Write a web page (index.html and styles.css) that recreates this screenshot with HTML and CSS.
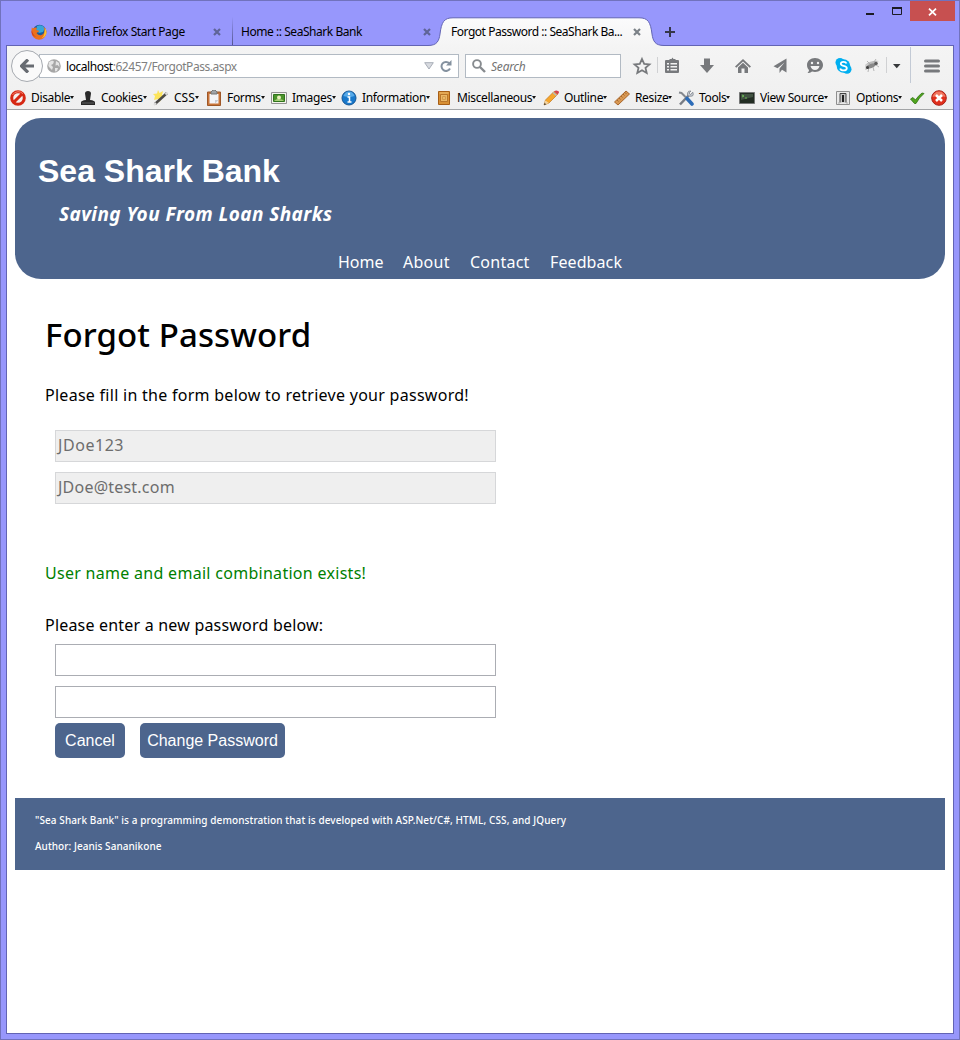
FILE: index.html
```html
<!DOCTYPE html>
<html lang="en">
<head>
<meta charset="utf-8">
<title>Forgot Password :: SeaShark Bank</title>
<link rel="stylesheet" href="styles.css">
</head>
<body>
<div class="window">
  <header class="titlebar">
    <div class="tab tab-first">
      <svg class="favicon" width="16" height="16" viewBox="0 0 16 16"><circle cx="8.500" cy="7.500" r="6.700" fill="#1b5c9e"/><path d="M6 2q5-2 8 2l-2 4-4 1-3-3z" fill="#36a5d8"/><path d="M1 3q0 1 1 1.500Q4 3 6 4L5 6q3 0 3 1.500L5.500 9q2 3 5 2 3-1 3-5l-1-3q3 2 3 5.500A7.500 7.500 0 0 1 .5 8Q.3 5 1 3z" fill="#ec701c"/><path d="M14 4q1.500 2 1.500 5-1 4-5 5.500 3-3 3-6z" fill="#fbc52b"/><path d="M1 6q0 4 4 7-4-1-4.500-5z" fill="#c93a22"/></svg>
      <span class="tab-label fit-a">Mozilla Firefox Start Page</span>
      <svg class="tab-close" width="8" height="8" viewBox="0 0 8 8"><path d="M1 1l6 6M7 1L1 7" stroke="#5f6498" stroke-width="2.200"/></svg>
    </div>
    <div class="tab tab-second">
      <span class="tab-label fit-b">Home :: SeaShark Bank</span>
      <svg class="tab-close" width="8" height="8" viewBox="0 0 8 8"><path d="M1 1l6 6M7 1L1 7" stroke="#5f6498" stroke-width="2.200"/></svg>
    </div>
    <div class="tab tab-active">
      <svg class="tab-shape" width="236" height="30" viewBox="0 0 236 30"><defs><linearGradient id="tabfill" x2="0" y2="1"><stop stop-color="#fbfbfc"/><stop offset="1" stop-color="#f4f4f4"/></linearGradient></defs><path d="M0 28.500C9 28.500 11 24 12 17 13.500 5 16 .8 25 .8H211C220 .8 222.500 5 224 17 225 24 227 28.500 236 28.500V30H0z" fill="url(#tabfill)"/><path d="M0 28.500C9 28.500 11 24 12 17 13.500 5 16 .8 25 .8H211C220 .8 222.500 5 224 17 225 24 227 28.500 236 28.500" fill="none" stroke="#6264b4"/></svg>
      <span class="tab-label fit-c">Forgot Password :: SeaShark Ba...</span>
      <svg class="tab-close" width="8" height="8" viewBox="0 0 8 8"><path d="M1 1l6 6M7 1L1 7" stroke="#7b8187" stroke-width="2.200"/></svg>
    </div>
    <svg class="new-tab" width="10" height="10" viewBox="0 0 10 10"><path d="M5 0v10M0 5h10" stroke="#35364a" stroke-width="2"/></svg>
    <div class="window-controls">
      <svg width="45" height="20" viewBox="0 0 45 20"><path d="M1 13h8" stroke="#1b1b24" stroke-width="2"/><path d="M27.500 6.500h9v7h-9z" fill="none" stroke="#1b1b24"/><path d="M27 7h10" stroke="#1b1b24" stroke-width="2"/></svg>
      <div class="close-window"><svg width="9" height="8" viewBox="0 0 9 8"><path d="M1 .7l7 6.600M8 .7L1 7.300" stroke="#fff" stroke-width="1.800"/></svg></div>
    </div>
  </header>

  <div class="viewport">
    <div class="chrome">
      <div class="navbar">
        <div class="back"><svg width="14" height="14" viewBox="0 0 14 14"><path d="M8 0.500L1.500 7l6.500 6.500M2 7h12" fill="none" stroke="#686c72" stroke-width="3.200"/></svg></div>
        <div class="urlbar">
          <svg width="14" height="14" viewBox="0 0 14 14"><circle cx="7" cy="7" r="6.800" fill="#a7a7a7"/><path d="M2 3l3-1.500 2 1-1 2.500-2 1 2 2-1 3-2-2-1.700-2zM9 2l3 2 .5 4-2-2-2 .5zM8 9l3 0-1 3-2 .5z" fill="#e4e4e4"/></svg>
          <span class="url"><b>localhost</b>:62457/ForgotPass.aspx</span>
          <svg class="drop" width="10" height="8" viewBox="0 0 10 8"><path d="M.7 .7h8.600L5 7z" fill="#d8dbe0" stroke="#a8adb7"/></svg>
          <svg width="12" height="12" viewBox="0 0 12 12"><path d="M9.300 3.300A4.500 4.500 0 1 0 10 8.500" fill="none" stroke="#84919f" stroke-width="2"/><path d="M11.500 0v5.500H6z" fill="#84919f"/></svg>
        </div>
        <div class="searchbar">
          <svg width="14" height="14" viewBox="0 0 14 14"><circle cx="5" cy="5" r="3.900" fill="none" stroke="#878b8f" stroke-width="1.900"/><path d="M8 8l5 5" stroke="#878b8f" stroke-width="2.400"/></svg>
          <span>Search</span>
        </div>
        <svg class="actions" width="332" height="40" viewBox="0 0 332 40">
          <g fill="#77797c">
            <path d="M21 13l2.200 4.800 5.300.6-4 3.500 1.200 5.100-4.700-2.700-4.700 2.700 1.200-5.100-4-3.500 5.300-.6z" fill="none" stroke="#77797c" stroke-width="1.800"/>
            <path d="M36.500 11v16" stroke="#d0d1d3"/>
            <path d="M45 14h3.500v-1h2l1-1.500 1 1.500h2v1H57q1 0 1 1v11q0 1-1 1H45q-1 0-1-1V15q0-1 1-1zM46 17v1.500h2V17zm3.500 0v1.500H56V17zM46 20v1.500h2V20zm3.500 0v1.500H56V20zM46 23v1.500h2V23zm3.500 0v1.500H56V23z" fill-rule="evenodd"/>
            <path d="M83 12.500h6v6.500h4l-7 8-7-8h4z"/>
            <path d="M122 13l8 7.500-1.300 1.300-6.700-6.300-6.700 6.300-1.300-1.300zM122 16.800l5 4.700V27h-3.500v-4.500h-3V27H117v-5.500z"/>
            <path d="M165.500 12.500v14l-4.500-2.700-2.500 3.200v-4.500l5-6-7 5.700-4-2z"/>
            <path d="M194 12c4.500 0 8 2.900 8 7s-3.500 7-8 7c-1 0-2-.2-3-.5-1.300 1-3 1.500-4.500 1.500 1-.8 1.500-2 1.500-3-1.300-1.300-2-3-2-5 0-4 3.500-7 8-7z"/>
            <circle cx="191" cy="17" r="1.200" fill="#f3f3f3"/><circle cx="197" cy="17" r="1.200" fill="#f3f3f3"/><path d="M189.500 20h9q-1 4-4.500 4t-4.500-4z" fill="#f3f3f3"/>
          </g>
          <g fill="#00aff0"><circle cx="222.500" cy="20" r="6.800"/><circle cx="219" cy="16.500" r="4.500"/><circle cx="226" cy="23.300" r="4.500"/></g>
          <path d="M225.500 17.500q-.7-1.700-3-1.700-2.700 0-2.700 2 0 1.500 2.700 2 3.300.6 3.300 2.400 0 2.200-3.200 2.200-2.800 0-3.400-2" fill="none" stroke="#fff" stroke-width="1.800"/>
          <g opacity=".85"><path d="M244 19q6-5 14-4-4 1-6 3l-8 1" fill="#b4b4b4"/><ellipse cx="250" cy="20" rx="5" ry="2" fill="#777" transform="rotate(-20 250 20)"/><circle cx="255" cy="17.500" r="1.800" fill="#444"/><path d="M245 19v5m3-3l-1 5m5-5l1 4m2-6l3 2M249 18l-3-3m7 1l2-3" stroke="#999" stroke-width=".8"/><circle cx="246.500" cy="21.500" r="1.500" fill="#222"/></g>
          <path d="M265.500 11v16" stroke="#d0d1d3"/><path d="M272 18h7.500l-3.750 4.300z" fill="#36383a"/>
          <path d="M289.500 1v36" stroke="#c3cad5"/><path d="M304.500 15h13M304.500 20h13M304.500 25h13" stroke="#77797c" stroke-width="3" stroke-linecap="round"/>
        </svg>
      </div>

      <div class="devbar">
        <div class="tool w1"><svg width="16" height="16" viewBox="0 0 16 16"><circle cx="8" cy="8" r="6.300" fill="#f4efee" stroke="#d62814" stroke-width="3"/><path d="M12.500 3.500l-9 9" stroke="#d62814" stroke-width="3"/><path d="M2.500 5Q4 2 8 1.700q3 0 5 2" fill="none" stroke="#f2806d"/></svg><span>Disable</span></div>
        <div class="tool w2"><svg width="16" height="16" viewBox="0 0 16 16"><path d="M5 3.500Q5 1 8 1t3 2.500L10.300 8 10 10q5 .5 5 2.500V15H1v-2.500Q1 10.500 6 10l-.3-2z" fill="#292929"/><path d="M2 13h12" stroke="#626262"/></svg><span>Cookies</span></div>
        <div class="tool w3"><svg width="16" height="16" viewBox="0 0 16 16"><path d="M5 0l1.500 3L10 1 9 5l3 2-4 1-1 4-2-3-4 1 1-4-2-2 4-.5z" fill="#fce45b"/><path d="M2 14L14 3" stroke="#4b4a48" stroke-width="2.500"/><path d="M1 15l2-2M12.500 4.500L14.500 2.500" stroke="#ddd" stroke-width="2"/></svg><span>CSS</span></div>
        <div class="tool w4"><svg width="16" height="16" viewBox="0 0 16 16"><path d="M1.500 2h13v13.500h-13z" fill="#c97539" stroke="#9e5728"/><path d="M3.500 4h9v9.500h-9z" fill="#f4f4f8"/><path d="M5 4V2l2-2h2l2 2v2z" fill="#a0a4aa" stroke="#777"/><path d="M9 13.500V10h3.500z" fill="#c8cbd3"/></svg><span>Forms</span></div>
        <div class="tool w5"><svg width="16" height="16" viewBox="0 0 16 16"><path d="M.5 2.500h15v11H.5z" fill="#f5f5ed" stroke="#929292"/><path d="M2.500 4.500h11v7h-11z" fill="#4b932a" stroke="#2f731c"/><path d="M3 11l3-2 5 .5 2 1.500z" fill="#a6ce77"/><circle cx="8" cy="7.500" r="2" fill="#e8f0bc"/></svg><span>Images</span></div>
        <div class="tool w6"><svg width="16" height="16" viewBox="0 0 16 16"><circle cx="8" cy="8" r="7" fill="#1878cb" stroke="#145594"/><path d="M2.500 6Q4 1.500 8 1.500T13.500 6q-5 2-11 0z" fill="#56a9e8"/><circle cx="8" cy="4" r="1.200" fill="#fff"/><path d="M6.500 7h2v5M6.500 12h4" fill="none" stroke="#fff" stroke-width="1.500"/></svg><span>Information</span></div>
        <div class="tool w7"><svg width="16" height="16" viewBox="0 0 16 16"><path d="M2.500 1.500h11v13h-11z" fill="#d89034" stroke="#a75e16"/><path d="M4.500 4.500h7v7h-7z" fill="#eab867" stroke="#b9752a"/><path d="M6.500 6.500h3v3h-3z" fill="none" stroke="#d49a4c"/><path d="M3.500 3h9" stroke="#efc177"/></svg><span>Miscellaneous</span></div>
        <div class="tool w8"><svg width="16" height="16" viewBox="0 0 16 16"><path d="M1 15l1.500-5L11 1.500l3.500 3L6 13z" fill="#f6a62c" stroke="#c07821" stroke-width=".7"/><path d="M11 1.500Q13 0 15 1t0 3l-.5.5z" fill="#d5434c"/><path d="M10 2.500l3.500 3" stroke="#b6bbc5" stroke-width="1.500"/><path d="M1 15l1.300-4.500L6 13z" fill="#f2d4a2"/><path d="M1 15l.6-2 1.500 1.300z" fill="#222"/></svg><span>Outline</span></div>
        <div class="tool w9"><svg width="16" height="16" viewBox="0 0 16 16"><path d="M.5 12L12 1l3.500 3L4 15z" fill="#d79752" stroke="#a9662a"/><path d="M3 10l1.500 1.500M5 8l1.500 1.500M7 6l1.500 1.500M9 4l1.500 1.500M11 2.500l1.500 1.500" stroke="#91541e" stroke-width=".7"/></svg><span>Resize</span></div>
        <div class="tool w10"><svg width="16" height="16" viewBox="0 0 16 16"><path d="M2 14.500L11 5" stroke="#777c85" stroke-width="2.500"/><path d="M14.800 2.200L12.500 4.500l-1.500-1.500L13 1Q10 .5 9.500 3t1 3T14.500 6q1.500-1.500.3-3.800z" fill="#c2c7cf" stroke="#777c85" stroke-width=".7"/><path d="M1 2.500l2.500.5L10 9.500" fill="none" stroke="#85898f" stroke-width="2"/><path d="M9 8.500l5 5.500" stroke="#2c6cb8" stroke-width="3.600" stroke-linecap="round"/></svg><span>Tools</span></div>
        <div class="tool w11"><svg width="16" height="16" viewBox="0 0 16 16"><path d="M.5 2.500h15v11H.5z" fill="#222d23" stroke="#757777"/><path d="M2 4h12v3L2 10z" fill="#415342"/><path d="M3 5l2 1-2 1M6 8h2" fill="none" stroke="#78d45a" stroke-width=".8"/></svg><span>View Source</span></div>
        <div class="tool w12"><svg width="16" height="16" viewBox="0 0 16 16"><path d="M1.500 1.500h13v13h-13z" fill="#e9e9e9" stroke="#8e8e8e"/><path d="M5 12.500v-9h6v9" fill="#c4c4c4" stroke="#444"/><path d="M7 5h2v7H7z" fill="#222"/><path d="M3.500 13h1M11.500 13h1" stroke="#777"/></svg><span>Options</span></div>
        <svg class="valid" width="16" height="16" viewBox="0 0 16 16"><path d="M1.500 9l2.500-1.500 2.500 2.500Q9 6 13 3l2 .5Q10 7.500 7 13.500H5.500z" fill="#51a51e" stroke="#2d7210" stroke-width=".8"/></svg>
        <svg width="16" height="16" viewBox="0 0 16 16"><circle cx="8" cy="8" r="7.300" fill="#e1301d" stroke="#aa2118"/><path d="M1.500 7Q3 1.500 8 1.500T14.500 7q-6-2-13 0z" fill="#f17760"/><path d="M5 5l6 6M11 5l-6 6" stroke="#fff" stroke-width="2.500"/></svg>
      </div>
    </div>

    <main class="page">
      <div class="banner">
        <div class="bank-name">Sea Shark Bank</div>
        <div class="tagline">Saving You From Loan Sharks</div>
        <nav class="menu"><a class="m1">Home</a><a class="m2">About</a><a class="m3">Contact</a><a class="m4">Feedback</a></nav>
      </div>
      <section class="content">
        <h1>Forgot Password</h1>
        <p class="intro">Please fill in the form below to retrieve your password!</p>
        <div class="fields">
          <div class="field disabled f1">JDoe123</div>
          <div class="field disabled f2">JDoe@test.com</div>
        </div>
        <p class="success">User name and email combination exists!</p>
        <p class="prompt">Please enter a new password below:</p>
        <div class="fields">
          <div class="field"></div>
          <div class="field"></div>
        </div>
        <div class="buttons"><button class="btn cancel">Cancel</button><button class="btn change">Change Password</button></div>
      </section>
      <footer class="footer">
        <p class="about">"Sea Shark Bank" is a programming demonstration that is developed with ASP.Net/C#, HTML, CSS, and JQuery</p>
        <p class="author">Author: Jeanis Sananikone</p>
      </footer>
    </main>
  </div>
</div>
</body>
</html>
```

FILE: styles.css
```css
* { box-sizing: border-box; }
body { margin: 0; font-family: "Noto Sans", "Open Sans", sans-serif; color: #000; }
svg { display: block; flex: none; }
p, h1 { margin: 0; }
.window { width: 960px; height: 1040px; background: #9797fc; border: 1px solid #7172bd; display: flex; flex-direction: column; overflow: hidden; }

/* Tab strip */
.titlebar { height: 44px; flex: none; display: flex; font-size: 12px; line-height: 16px; white-space: nowrap; }
.tab { display: flex; align-items: center; padding-top: 17px; height: 45px; }
.tab-label { flex: none; }
.tab-close { margin-left: auto; }
.tab-first { width: 232px; padding-left: 30px; padding-right: 11px; border-right: 1px solid; border-image: linear-gradient(transparent 35%, #4f5185) 1; }
.favicon { margin-right: 6px; }
.tab-second { width: 206px; padding-left: 8px; padding-right: 8px; }
.tab-active { position: relative; width: 215px; padding-left: 12px; padding-right: 13px; }
.tab-shape { position: absolute; left: -11px; top: 16px; z-index: 1; }
.tab-active .tab-label, .tab-active .tab-close { position: relative; z-index: 2; }
.new-tab { margin: 26px 0 0 11px; }
.window-controls { margin-left: auto; display: flex; margin-right: 4px; }
.close-window { width: 45px; height: 20px; background: #c75050; display: flex; align-items: center; justify-content: center; padding-top: 1px; }
.fit-a { letter-spacing: -0.41px; }
.fit-b { letter-spacing: -0.45px; }
.fit-c { letter-spacing: -0.47px; }

/* Browser frame */
.viewport { margin: 0 5px 5px; flex: 1; border: 1px solid #6264b4; background: #fff; display: flex; flex-direction: column; }
.chrome { height: 64px; flex: none; background: linear-gradient(#f4f4f4, #efefef); border-bottom: 1px solid #a2a4a6; }
.navbar { height: 40px; display: flex; align-items: center; }
.back { width: 32px; height: 32px; margin-left: 4px; border: 1px solid #a6aab0; border-radius: 50%; background: #fafafa; display: flex; align-items: center; justify-content: center; z-index: 1; }
.urlbar { width: 420px; height: 24px; margin-left: -4px; border: 1px solid #b2bac3; background: #fff; display: flex; align-items: center; padding: 0 6px 0 7px; font-size: 12px; }
.url { margin-left: 5px; color: #808080; letter-spacing: -0.45px; }
.url b { font-weight: 400; color: #000; }
.drop { margin-left: auto; margin-right: 6px; }
.searchbar { width: 156px; height: 24px; margin-left: 6px; border: 1px solid #b2bac3; background: #fff; display: flex; align-items: center; padding-left: 6px; gap: 5px; font-size: 12px; font-style: italic; color: #737373; letter-spacing: -0.2px; }

/* Developer toolbar */
.devbar { height: 23px; display: flex; align-items: center; padding-left: 3px; font-size: 12px; letter-spacing: -0.35px; white-space: nowrap; }
.tool { display: flex; align-items: center; flex: none; }
.tool span { margin-left: 5px; }
.tool::after { content: ""; border: 2.5px solid transparent; border-top: 3px solid #111; border-bottom: 0; }
.w1 { width: 70px; } .w2 { width: 73px; } .w3 { width: 53px; } .w4 { width: 65px; }
.w5 { width: 70px; } .w6 { width: 95px; } .w7 { width: 107px; } .w8 { width: 71px; }
.w9 { width: 64px; } .w10 { width: 61px; } .w11 { width: 96px; } .w12 { width: 74px; }
.w3 { letter-spacing: 0; }
.valid { margin-right: 6px; }

/* Bank page */
.page { padding: 8px; font-size: 16px; line-height: 20px; }
.banner { height: 161px; background: #4d658d; border-radius: 26px; color: #fff; padding: 35px 0 0 23px; }
.bank-name { font: bold 32px/37px "Liberation Sans", Arial, sans-serif; }
.tagline { margin: 12px 0 0 21px; font-size: 19px; line-height: 24px; font-style: italic; font-weight: 700; letter-spacing: .42px; }
.menu { display: flex; margin: 26px 0 0 300px; }
.m1 { width: 65px; } .m2 { width: 67px; } .m3 { width: 80px; }
.m2, .m3 { letter-spacing: .25px; }
.m4 { letter-spacing: .1px; }
.content { height: 519px; padding: 36px 0 0 30px; }
h1 { font-size: 33px; line-height: 40px; font-weight: 500; letter-spacing: .1px; }
.intro { margin-top: 30px; letter-spacing: .275px; }
.fields { display: flex; flex-direction: column; gap: 10px; margin: 25px 0 0 10px; }
.field { width: 441px; height: 32px; border: 1px solid #abadb3; padding: 4px 2px; }
.disabled { background: #efefef; border-color: #d6d7d9; color: #6d6d6d; }
.f1 { letter-spacing: .55px; }
.f2 { letter-spacing: .22px; }
.success { margin-top: 59px; color: #008000; letter-spacing: .29px; }
.prompt { margin-top: 32px; letter-spacing: .2px; }
.prompt + .fields { margin-top: 9px; }
.buttons { display: flex; gap: 15px; margin: 5px 0 0 10px; }
.btn { height: 35px; border: 0; border-radius: 5px; padding: 0; background: #4d658d; color: #fff; font: 16px "Liberation Sans", Arial, sans-serif; }
.cancel { width: 70px; }
.change { width: 145px; }
.footer { height: 72px; background: #4d658d; color: #fff; font-size: 10px; line-height: 14px; font-weight: 500; padding: 15px 20px; display: flex; flex-direction: column; gap: 12px; }
.about { letter-spacing: .09px; }
.author { letter-spacing: .05px; }
```
